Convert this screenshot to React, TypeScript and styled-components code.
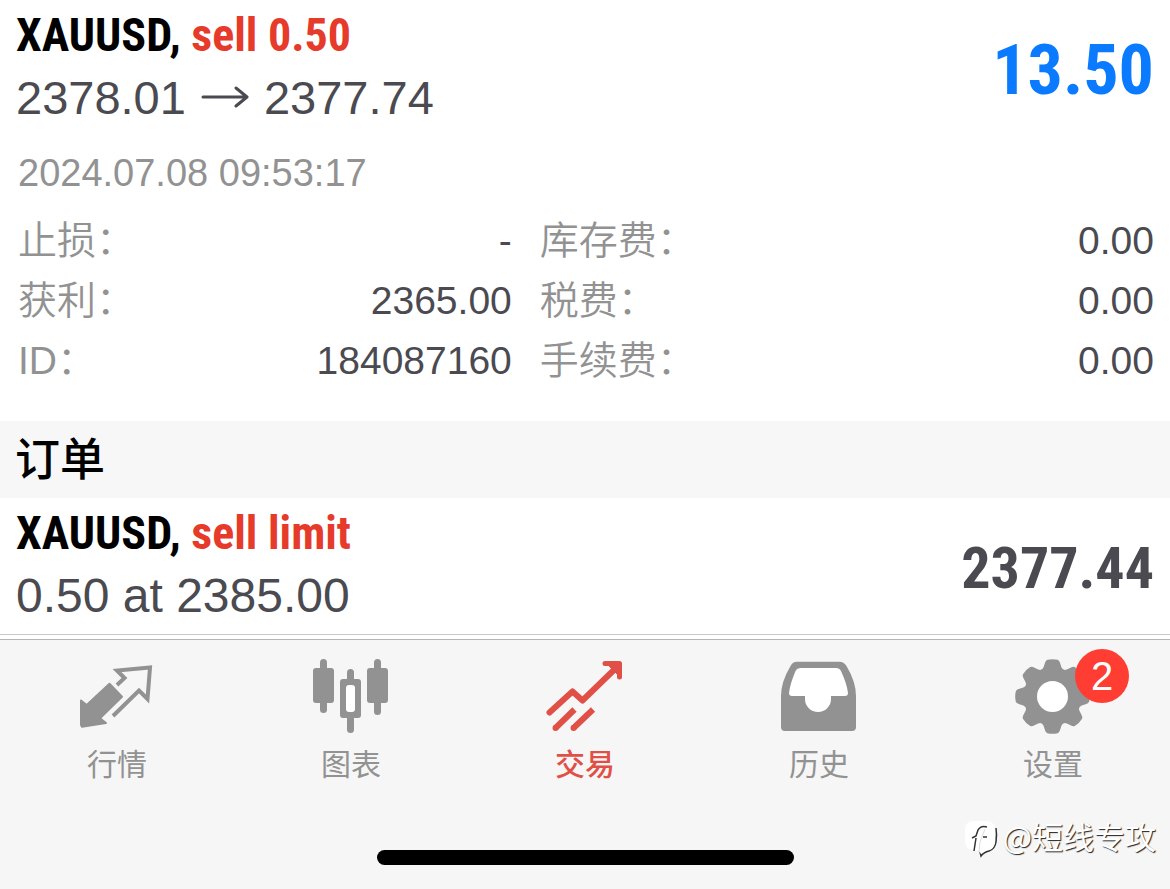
import React from "react";
import styled, { createGlobalStyle } from "styled-components";

const GlobalStyle = createGlobalStyle`
  * { box-sizing: border-box; }
  body {
    margin: 0;
    background: #fff;
    font-family: "Liberation Sans", "Noto Sans CJK SC", sans-serif;
    color: #4a4a50;
  }
`;

const NARROW = `"Roboto Condensed", "Liberation Sans", sans-serif`;

const Screen = styled.div`
  position: relative;
  min-height: 100vh;
  display: flex;
  flex-direction: column;
`;

const Entry = styled.article`
  padding: 7px 16px 0;
`;

const Summary = styled.div`
  display: flex;
  justify-content: space-between;
  align-items: center;
`;

const Title = styled.h2`
  margin: 0;
  font: bold 46px/56px ${NARROW};
  color: #000;
`;

const Side = styled.span`
  color: #e63a2b;
`;

const Prices = styled.p`
  margin: 0;
  display: flex;
  align-items: center;
  gap: 15px;
  font-size: 47px;
  line-height: 70px;
`;

const Terms = styled(Prices)`
  font-size: 48px;
`;

const Amount = styled.strong<{ $profit?: boolean }>`
  font: bold ${(p) => (p.$profit ? "70px/80px" : "58px/72px")} ${NARROW};
  color: ${(p) => (p.$profit ? "#0a7aff" : "#4a4a50")};
`;

const Time = styled.time`
  display: block;
  padding: 14px 2px 0;
  font-size: 38px;
  line-height: 52px;
  color: #929292;
`;

const Details = styled.dl`
  margin: 0;
  padding: 12px 0 30px 2px;
  display: grid;
  grid-template-columns: 41fr 51fr;
  column-gap: 28px;
`;

const Detail = styled.div`
  display: flex;
  justify-content: space-between;
  font-size: 39px;
  line-height: 60px;
`;

const Label = styled.dt`
  color: #929292;
  font-weight: 350;
`;

const Value = styled.dd`
  margin: 0;
`;

const SectionTitle = styled.h1`
  margin: 0;
  padding: 2px 15px 0;
  background: #f7f7f7;
  color: #000;
  font-size: 45px;
  font-weight: 500;
  line-height: 75px;
`;

const TabBar = styled.footer`
  flex: 1;
  margin-top: 4px;
  border-top: 1px solid #b4b4b4;
  background: #f6f6f6;
  display: flex;
  flex-direction: column;
  justify-content: space-between;
`;

const Divider = styled.hr`
  width: 100%;
  margin: 3px 0 0;
  border: 0;
  border-top: 1px solid #c8c8c8;
`;

const Tabs = styled.nav`
  display: grid;
  grid-template-columns: repeat(5, 1fr);
  padding-top: 16px;
`;

const Tab = styled.button<{ $active?: boolean }>`
  display: flex;
  flex-direction: column;
  align-items: center;
  gap: 4px;
  padding: 0;
  border: 0;
  background: none;
  font: ${(p) => (p.$active ? 500 : 400)} 30px/44px "Noto Sans CJK SC", sans-serif;
  color: ${(p) => (p.$active ? "#e05046" : "#929292")};
`;

const IconBox = styled.span`
  position: relative;
  width: 80px;
  height: 80px;
  svg { display: block; }
`;

const Badge = styled.span`
  position: absolute;
  top: -7px;
  right: -36px;
  width: 54px;
  height: 54px;
  border-radius: 50%;
  background: #ff3d32;
  color: #fff;
  font: 40px/54px "Liberation Sans", sans-serif;
  text-align: center;
`;

const HomeIndicator = styled.div`
  align-self: center;
  width: 36%;
  max-width: 417px;
  height: 15px;
  margin-bottom: 24px;
  border-radius: 8px;
  background: #000;
`;

const Watermark = styled.div`
  position: absolute;
  right: 14px;
  bottom: 31px;
  display: flex;
  align-items: flex-end;
  gap: 4px;
  font: 31px/44px "Noto Sans CJK SC", sans-serif;
  color: #fff;
  text-shadow: 1px 1px 1px #222;
`;

const Arrow = () => (
  <svg
    width="48"
    height="24"
    viewBox="0 0 48 24"
    fill="none"
    stroke="#4a4a50"
    strokeWidth="3"
    strokeLinecap="round"
    strokeLinejoin="round"
    role="img"
    aria-label="to"
  >
    <path d="M2 11H46M35 2L46 11L35 20" />
  </svg>
);

const QuotesIcon = () => (
  <svg width="80" height="80" viewBox="0 0 80 80">
    <path
      d="M4 44.5L9.7 49L32.5 27.7L45 40.8L23 62.3L29 67L5 70.7L4 69Z"
      fill="currentColor"
      stroke="currentColor"
      strokeWidth="2"
      strokeLinejoin="round"
    />
    <path
      d="M40 29L47.500 22L40 14.500L73 11.500L70.500 43L62 34.500L36 60"
      fill="none"
      stroke="currentColor"
      strokeWidth="4"
    />
  </svg>
);

const ChartIcon = () => (
  <svg width="80" height="80" viewBox="0 0 80 80" fill="currentColor">
    <rect x="2" y="12" width="21" height="35" rx="3" />
    <rect x="9" y="3" width="7" height="54" rx="3.5" />
    <rect x="36" y="13" width="7" height="64" rx="3.5" />
    <rect x="29" y="23" width="21" height="39" rx="3" />
    <rect x="35" y="29" width="9" height="27" rx="3" fill="#fff" />
    <rect x="56" y="12" width="21" height="35" rx="3" />
    <rect x="63" y="3" width="7" height="56" rx="3.5" />
  </svg>
);

const TradeIcon = () => (
  <svg width="80" height="80" viewBox="0 0 80 80" fill="none" stroke="currentColor" strokeLinejoin="round">
    <path d="M4.500 56.500L27.500 35.500L37.500 44.500L72 11" strokeWidth="6" strokeLinecap="round" />
    <path d="M60 7.500H74.500V21" strokeWidth="5" strokeLinecap="round" />
    <path d="M62 8L74 20V8Z" fill="currentColor" strokeWidth="1" />
    <path d="M10.500 72L29.500 53.500M28.500 72L48 53.500" strokeWidth="6" />
    <path d="M10.500 72H10.600M28.500 72H28.600" strokeWidth="6" strokeLinecap="round" />
  </svg>
);

const HistoryIcon = () => (
  <svg width="80" height="80" viewBox="0 0 80 80">
    <path
      d="M18 5.700H60Q65 5.700 67.500 10Q77 26 77 40V71Q77 75 73 75H6Q2 75 2 71V40Q2 26 11.500 10Q13.500 5.700 18 5.700Z"
      fill="currentColor"
    />
    <path
      d="M22 12H57Q60.500 12 62 15Q68 28 69 37Q69 40 66 40H52V43A13 13 0 0 1 26 43V40H13Q10 40 10 37Q11 28 16.500 15Q18 12 22 12Z"
      fill="#fff"
    />
  </svg>
);

const gearPath = (() => {
  const at = (deg: number, r: number) => {
    const a = (deg * Math.PI) / 180;
    return `${(39.5 + r * Math.sin(a)).toFixed(2)} ${(40.5 - r * Math.cos(a)).toFixed(2)}`;
  };
  let d = "";
  for (let k = 0; k < 8; k++) {
    const c = k * 45;
    d += `${k ? "L" : "M"}${at(c - 8, 37)}Q${at(c, 38)} ${at(c + 8, 37)}`;
    d += `Q${at(c + 11, 36.5)} ${at(c + 13, 34)}L${at(c + 17, 30.5)}`;
    d += `Q${at(c + 22.5, 27.5)} ${at(c + 28, 30.5)}L${at(c + 32, 34)}Q${at(c + 34, 36.5)} ${at(c + 37, 37)}`;
  }
  return d + "Z";
})();

const SettingsIcon = () => (
  <svg width="80" height="80" viewBox="0 0 80 80">
    <path d={gearPath} fill="currentColor" />
    <circle cx="39.500" cy="40.500" r="15.500" fill="#fff" />
  </svg>
);

const WatermarkLogo = () => (
  <svg width="34" height="38" viewBox="0 0 34 38" fill="none">
    <path d="M31 8Q32 14 31 22Q30 29 24 31Q19 32 16 36L15 32" stroke="#333" strokeWidth="1.500" />
    <path d="M9 1H21Q30 1 30 10V20Q30 30 22 30L16 34L14 31L9 30Q0 30 0 20V10Q0 1 9 1Z" fill="#fff" />
    <path d="M22 7Q16 5 13 10L11 16L7 18M11 18L9 31M18 17H22" stroke="#333" strokeWidth="1.500" />
    <path d="M20 9L15 22L14 32" stroke="#ddd" strokeWidth="1" />
  </svg>
);

const details = [
  ["止损", "-"],
  ["库存费", "0.00"],
  ["获利", "2365.00"],
  ["税费", "0.00"],
  ["ID", "184087160"],
  ["手续费", "0.00"],
];

const tabs = [
  { label: "行情", Icon: QuotesIcon },
  { label: "图表", Icon: ChartIcon },
  { label: "交易", Icon: TradeIcon, active: true },
  { label: "历史", Icon: HistoryIcon },
  { label: "设置", Icon: SettingsIcon, badge: 2 },
];

export default function App() {
  return (
    <Screen>
      <GlobalStyle />
      <Entry>
        <Summary>
          <div>
            <Title>
              XAUUSD, <Side>sell 0.50</Side>
            </Title>
            <Prices>
              <span>2378.01</span>
              <Arrow />
              <span>2377.74</span>
            </Prices>
          </div>
          <Amount $profit>13.50</Amount>
        </Summary>
        <Time dateTime="2024-07-08T09:53:17">2024.07.08 09:53:17</Time>
        <Details>
          {details.map(([label, value]) => (
            <Detail key={label}>
              <Label>{label}：</Label>
              <Value>{value}</Value>
            </Detail>
          ))}
        </Details>
      </Entry>
      <SectionTitle>订单</SectionTitle>
      <Entry>
        <Summary>
          <div>
            <Title>
              XAUUSD, <Side>sell limit</Side>
            </Title>
            <Terms>0.50 at 2385.00</Terms>
          </div>
          <Amount>2377.44</Amount>
        </Summary>
      </Entry>
      <Divider />
      <TabBar>
        <Tabs>
          {tabs.map(({ label, Icon, active, badge }) => (
            <Tab key={label} type="button" $active={active}>
              <IconBox>
                <Icon />
                {badge && <Badge>{badge}</Badge>}
              </IconBox>
              {label}
            </Tab>
          ))}
        </Tabs>
        <HomeIndicator />
      </TabBar>
      <Watermark>
        <WatermarkLogo />
        @短线专攻
      </Watermark>
    </Screen>
  );
}
